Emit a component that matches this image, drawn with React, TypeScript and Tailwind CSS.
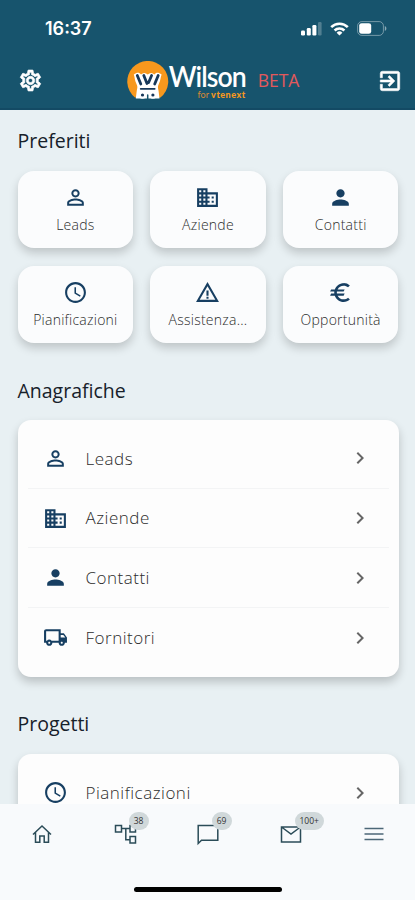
import { ReactNode } from 'react';
import { IconType } from 'react-icons';
import {
  MdChevronRight,
  MdEuro,
  MdExitToApp,
  MdOutlineDomain,
  MdOutlineLocalShipping,
  MdOutlineSettings,
  MdPerson,
  MdPersonOutline,
  MdSchedule,
  MdWarningAmber,
} from 'react-icons/md';

interface Entry {
  label: string;
  icon: IconType;
}

const favourites: Entry[] = [
  { label: 'Leads', icon: MdPersonOutline },
  { label: 'Aziende', icon: MdOutlineDomain },
  { label: 'Contatti', icon: MdPerson },
  { label: 'Pianificazioni', icon: MdSchedule },
  { label: 'Assistenza...', icon: MdWarningAmber },
  { label: 'Opportunità', icon: MdEuro },
];

const registry: Entry[] = [
  { label: 'Leads', icon: MdPersonOutline },
  { label: 'Aziende', icon: MdOutlineDomain },
  { label: 'Contatti', icon: MdPerson },
  { label: 'Fornitori', icon: MdOutlineLocalShipping },
];

const projects: Entry[] = [{ label: 'Pianificazioni', icon: MdSchedule }];

function StatusBar() {
  return (
    <div className="flex h-[57px] items-center justify-between pl-[45px] pr-[28px]">
      <span className="font-['Inter',sans-serif] text-[18px] font-semibold leading-none">16:37</span>
      <div className="flex items-center gap-[8px]">
        <svg width="21" height="14" viewBox="0 0 21 14" fill="currentColor">
          <rect x="0" y="8.5" width="4" height="5" rx="1.2" />
          <rect x="5.8" y="6" width="4" height="7.5" rx="1.2" />
          <rect x="11.4" y="3" width="4" height="10.5" rx="1.2" />
          <rect x="17" y="0" width="3.6" height="13.5" rx="1.2" opacity="0.25" />
        </svg>
        <svg width="19" height="14" viewBox="0 0 19 14" fill="none" stroke="currentColor" strokeWidth="2.6">
          <path d="M1.2 5.2a11.8 11.8 0 0 1 16.6 0" />
          <path d="M4.6 8.5a7 7 0 0 1 9.8 0" />
          <path d="M9.5 13.6 6.6 10.7a4.1 4.1 0 0 1 5.8 0z" fill="currentColor" stroke="none" />
        </svg>
        <svg width="30" height="15" viewBox="0 0 30 15">
          <rect x="0.6" y="0.6" width="25.8" height="13.8" rx="4.2" fill="none" stroke="#fff" strokeOpacity="0.4" />
          <rect x="2.2" y="2.2" width="12" height="10.6" rx="2.4" fill="#fff" />
          <path d="M27.8 5v5c1-.4 1.6-1.4 1.6-2.5S28.8 5.4 27.8 5z" fill="#fff" fillOpacity="0.5" />
        </svg>
      </div>
    </div>
  );
}

function Logo() {
  return (
    <div className="flex items-center">
      <svg
        className="shrink-0"
        width="42"
        height="39"
        viewBox="0 0 42 39"
        fill="none"
        strokeLinecap="round"
        strokeLinejoin="round"
      >
        <path d="M8 36.5A20.5 20.5 0 1 1 33.5 36.5z" fill="#f7981d" />
        {/* cart body */}
        <path
          d="M6.8 13.5c3.500-2.500 5.500-2 7.200 0 2-2 4.500-2 6.700 0 2.200-2 4.700-2 6.700 0 1.700-2 3.700-2.500 7.200 0-1.200 3-1 6-2.600 9-1.500 3-1.200 4-.5 7l1 8H8.800l1-8c.7-3 1-4-.5-7-1.600-3-1.400-6-2.500-9z"
          fill="#fff"
        />
        <path
          d="M10.300 14.500l3.500 8.500M16.800 14.500l3.200 8M24.600 14.500l-3 7M31.200 14.500l-3.500 8.500"
          stroke="#17385a"
          strokeWidth="2.800"
        />
        <path d="M13.700 27.800h14" stroke="#17385a" strokeWidth="1.800" />
        <path d="M20.700 38v-4" stroke="#17546d" strokeWidth="1.500" />
        <circle cx="15.500" cy="34" r="2.700" fill="#17385a" stroke="#fff" strokeWidth="2.200" />
        <circle cx="25.900" cy="34" r="2.700" fill="#17385a" stroke="#fff" strokeWidth="2.200" />
      </svg>
      <div className="flex w-[77px] flex-col items-end">
        <span className="origin-right scale-x-[0.92] font-['Lato',sans-serif] text-[29px] font-semibold leading-[26px] tracking-[-1px]">
          Wilson
        </span>
        <span className="mt-[1px] whitespace-nowrap font-['Lato',sans-serif] text-[9px] leading-[9px] text-[#d98a35]">
          for <b className="font-black tracking-[0.5px] text-[#f7981d]">vtenext</b>
        </span>
      </div>
    </div>
  );
}

function Header() {
  return (
    <header className="h-[110px] border-b-2 border-[#134a64] bg-[#17546d] text-white">
      <StatusBar />
      <div className="flex h-[47px] items-center justify-between pl-[18px] pr-[12px]">
        <MdOutlineSettings className="size-[25px] [&>path:last-child]:stroke-white [&>path:last-child]:stroke-[0.7]" />
        <div className="flex items-center pl-[6px]">
          <Logo />
          <span className="ml-[12px] text-[17.5px] font-medium leading-none text-[#e2595c]">BETA</span>
        </div>
        <MdExitToApp className="size-[26px] [&>path:last-child]:stroke-white [&>path:last-child]:stroke-[0.5]" />
      </div>
    </header>
  );
}

function Tile({ label, icon: Icon }: Entry) {
  return (
    <div className="flex h-[77px] flex-col items-center rounded-[16px] bg-[#fbfcfd] pt-[14px] shadow-[0_5px_10px_rgba(0,0,0,0.18)]">
      <Icon className="size-[25px] text-[#173f62]" />
      <span className="mt-[5px] text-[14px] font-light leading-[20px] tracking-[0.25px] text-[#2c2c2c]">{label}</span>
    </div>
  );
}

function ListCard({ items }: { items: Entry[] }) {
  return (
    <div className="rounded-[13px] bg-[#fdfdfd] px-[10px] py-[9px] shadow-[0_5px_10px_rgba(0,0,0,0.2)]">
      {items.map(({ label, icon: Icon }) => (
        <div
          key={label}
          className="flex h-[59.7px] items-center border-b border-[#f3f4f5] pl-[15px] pr-[17px] last:border-b-0"
        >
          <Icon className="size-[25px] text-[#173f62]" />
          <span className="ml-[18px] text-[17px] font-light tracking-[0.5px] text-[#2c2c2c]">{label}</span>
          <MdChevronRight className="ml-auto size-[24px] text-[#666]" />
        </div>
      ))}
    </div>
  );
}

function Heading({ children }: { children: ReactNode }) {
  return <h2 className="text-[19.5px] font-normal leading-[28px] text-[#17212a]">{children}</h2>;
}

function NavItem({ badge, children }: { badge?: string; children: ReactNode }) {
  return (
    <div className="flex flex-1 justify-center">
      <div className="relative size-[24px]">
        <svg width="24" height="24" viewBox="0 0 24 24" fill="none" stroke="#2b4c58" strokeWidth="1.5">
          {children}
        </svg>
        {badge && (
          <span className="absolute -top-[10px] left-[16px] flex h-[18px] min-w-[20px] items-center justify-center rounded-full bg-[#d0d8da] px-[5px] text-[8.5px] leading-none text-[#333]">
            {badge}
          </span>
        )}
      </div>
    </div>
  );
}

function BottomNav() {
  return (
    <nav className="h-[96px] shrink-0 bg-[#f8fafc]">
      <div className="flex h-[83px] pt-[18px]">
        <NavItem>
          <path d="M3 12.5 12 4l9 8.500M5.500 10.500v9.700h4.300v-6.300h4.400v6.300h4.300v-9.700" />
        </NavItem>
        <NavItem badge="38">
          <path d="M2.500 3.500h6v6.500h-6zM17 3.500h5.500V10H17zM17 14.500h5.500v6.500H17zM8.500 6.500H17M12.800 6.500v11.200H17" />
        </NavItem>
        <NavItem badge="69">
          <path d="M2.200 21.500V3.500h19.600v14.800H5.500z" />
        </NavItem>
        <NavItem badge="100+">
          <path d="M2.500 5v15h19V5zM2.500 5 12 12l9.500-7" />
        </NavItem>
        <NavItem>
          <path d="M2.500 6.500h19M2.500 12h19M2.500 17.500h19" strokeWidth="1.7" stroke="#4c6777" />
        </NavItem>
      </div>
      <div className="mx-auto h-[5px] w-[148px] rounded-full bg-black" />
    </nav>
  );
}

export default function App() {
  return (
    <div className="flex h-[900px] w-[415px] flex-col overflow-hidden bg-[#e8f0f3] font-['Open_Sans',sans-serif]">
      <Header />
      <main className="min-h-0 flex-1 overflow-hidden pl-[17.5px] pr-[16.5px] pt-[17px]">
        <Heading>Preferiti</Heading>
        <div className="mt-[16px] grid grid-cols-3 gap-x-[17px] gap-y-[18px]">
          {favourites.map((item) => (
            <Tile key={item.label} {...item} />
          ))}
        </div>
        <div className="mb-[15px] mt-[34px]">
          <Heading>Anagrafiche</Heading>
        </div>
        <ListCard items={registry} />
        <div className="mb-[16px] mt-[33px]">
          <Heading>Progetti</Heading>
        </div>
        <ListCard items={projects} />
      </main>
      <BottomNav />
    </div>
  );
}
